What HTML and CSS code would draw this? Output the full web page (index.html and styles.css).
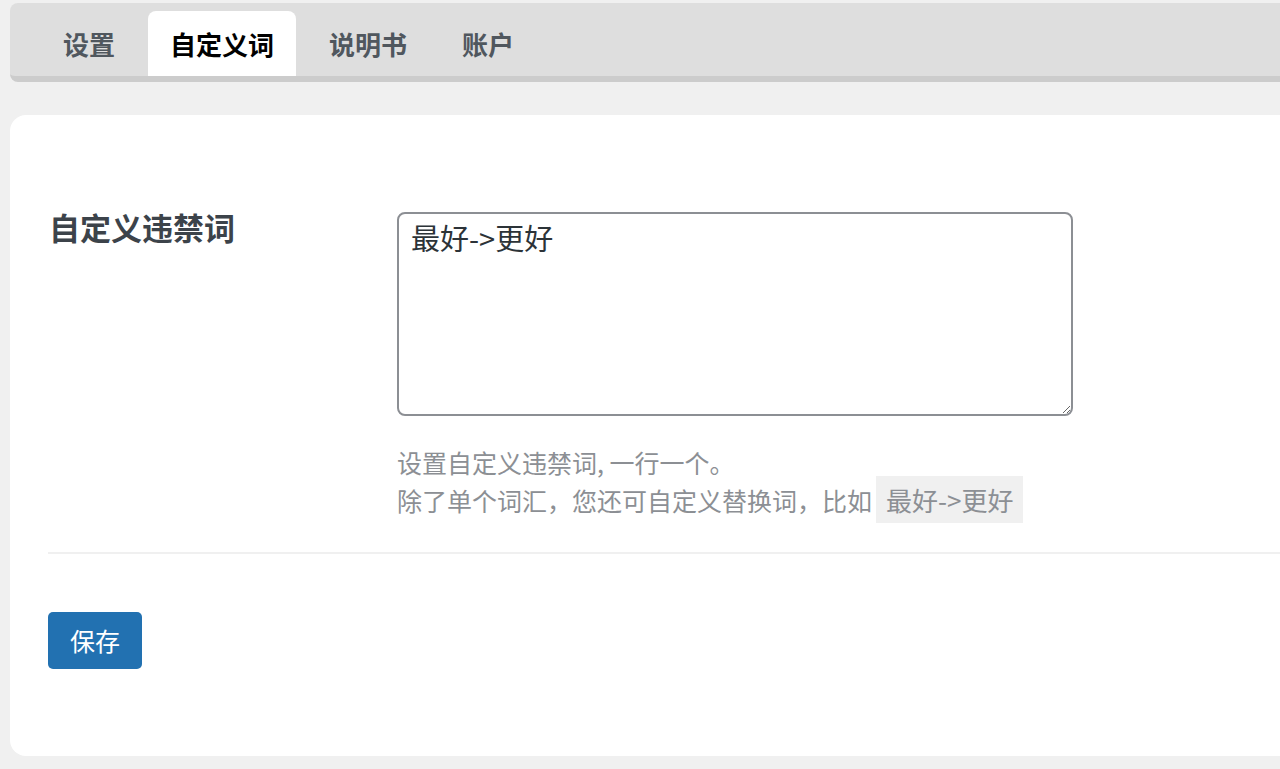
FILE: index.html
```html
<!DOCTYPE html>
<html lang="zh-CN">
<head>
<meta charset="utf-8">
<title>自定义词</title>
<link rel="stylesheet" href="styles.css">
</head>
<body>
<div class="wrap">
  <nav class="tabs">
    <a class="tab">设置</a>
    <a class="tab active">自定义词</a>
    <a class="tab">说明书</a>
    <a class="tab">账户</a>
  </nav>
  <section class="card">
    <div class="row">
      <div class="label">自定义违禁词</div>
      <div class="field">
        <textarea class="input">最好->更好</textarea>
        <p class="desc">设置自定义违禁词, 一行一个。<br>除了单个词汇，您还可自定义替换词，比如<code class="code">最好->更好</code></p>
      </div>
    </div>
    <div class="sep"></div>
    <div class="actions">
      <button class="btn">保存</button>
    </div>
  </section>
</div>
</body>
</html>
```
FILE: styles.css
```css
html, body {
  margin: 0;
  padding: 0;
  background: #f0f0f0;
  overflow: hidden;
  font-family: "Noto Sans CJK SC", "Noto Sans", sans-serif;
}
.wrap {
  padding: 3px 0 0 10px;
  width: 1300px;
}
.tabs {
  display: flex;
  align-items: flex-end;
  gap: 11px;
  height: 65px;
  padding: 8px 0 0 31px;
  background: #dedede;
  border-bottom: 6px solid #cccccc;
  border-radius: 8px 0 0 8px;
  box-sizing: content-box;
}
.tab {
  display: flex;
  align-items: center;
  height: 65px;
  padding: 0 22px;
  font-size: 26px;
  font-weight: 700;
  color: #50575e;
  border-radius: 8px 8px 0 0;
  white-space: nowrap;
}
.tab.active {
  background: #ffffff;
  color: #000000;
}
.card {
  margin-top: 33px;
  background: #ffffff;
  border-radius: 16px 0 0 16px;
  height: 641px;
  padding: 97px 0 0 38px;
  box-sizing: border-box;
}
.row {
  display: flex;
}
.label {
  width: 349px;
  flex: none;
  font-size: 31px;
  line-height: 30px;
  font-weight: 700;
  color: #3c434a;
  padding-left: 1px;
  box-sizing: border-box;
}
.field {
  display: flex;
  flex-direction: column;
}
.input {
  width: 676px;
  height: 204px;
  box-sizing: border-box;
  border: 2px solid #8c8f94;
  border-radius: 8px;
  padding: 5px 12px;
  font-family: "Noto Sans CJK SC", "Noto Sans", sans-serif;
  font-size: 29px;
  line-height: 36px;
  color: #2c3338;
  margin: 0;
  outline: none;
}
.desc {
  margin: 28px 0 0 0;
  font-size: 25px;
  line-height: 37px;
  color: #8c8f94;
}
.code {
  font-family: "Noto Sans CJK SC", "Noto Sans", sans-serif;
  background: #f0f0f0;
  padding: 5px 10px;
  margin-left: 4px;
  font-size: 26px;
  color: #8c8f94;
}
.sep {
  height: 2px;
  background: #f0f0f0;
  margin-top: 33px;
}
.actions {
  padding-top: 58px;
}
.btn {
  height: 57px;
  padding: 0 22px;
  background: #2271b1;
  border: none;
  border-radius: 5px;
  color: #ffffff;
  font-family: "Noto Sans CJK SC", "Noto Sans", sans-serif;
  font-size: 25px;
  line-height: 57px;
}
```
